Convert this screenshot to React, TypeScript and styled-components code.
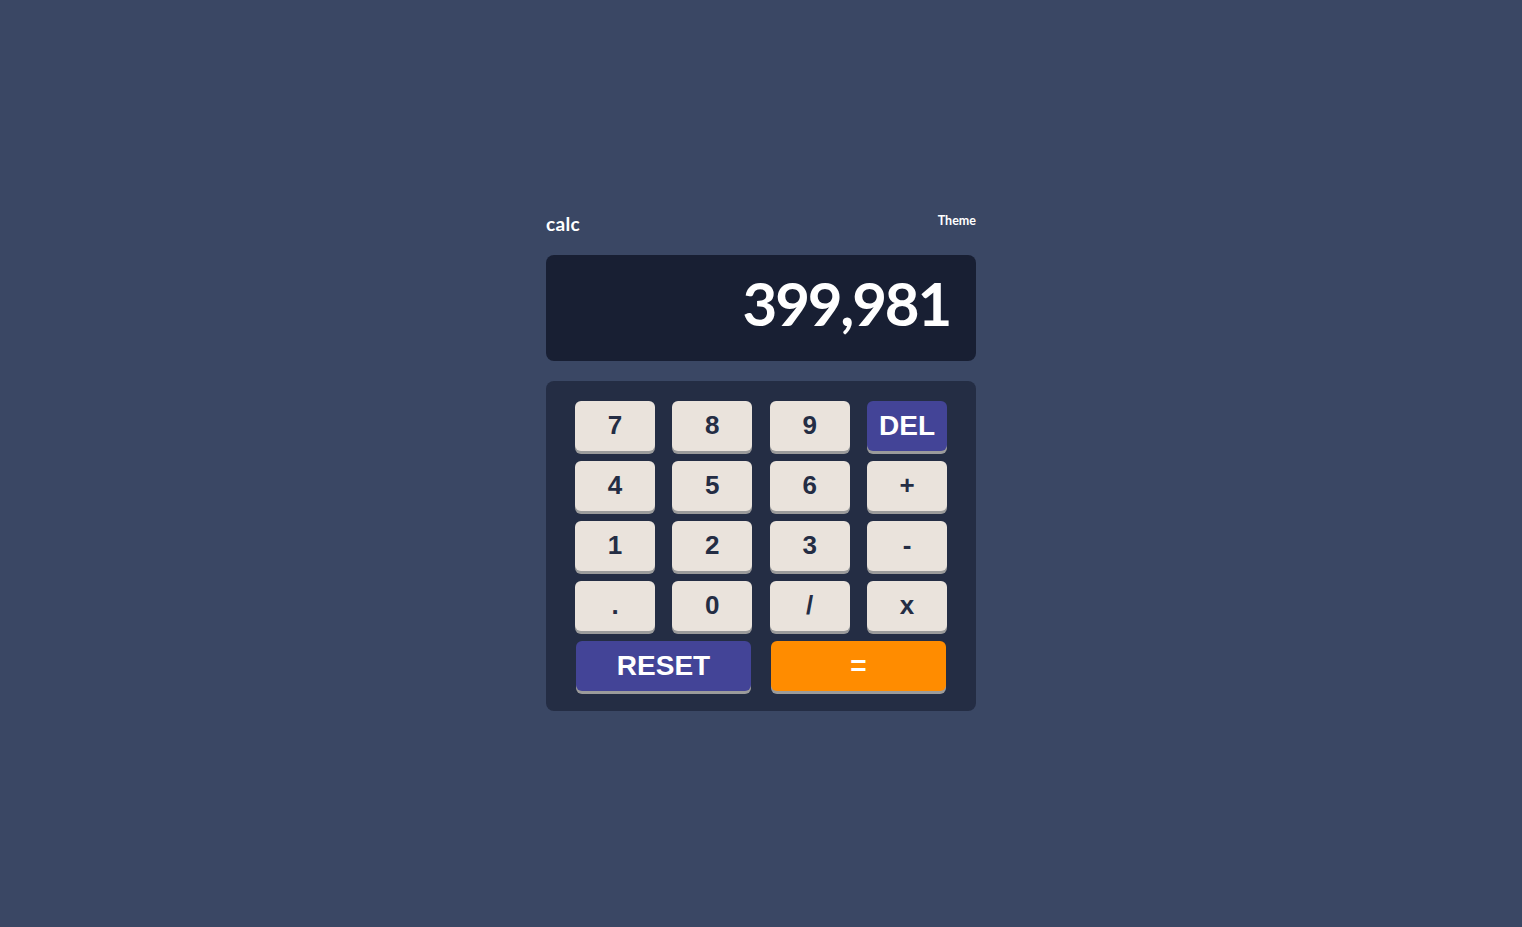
import React, { FC } from "react";
import styled, { createGlobalStyle } from "styled-components";

const GlobalStyle = createGlobalStyle`
  html, body {
    margin: 0;
    padding: 0;
    background: #3a4764;
  }
  body {
    font-family: "Liberation Sans", Arial, sans-serif;
  }
`;

type KeyKind = "num" | "del" | "reset" | "equal";

const keys: { label: string; kind: KeyKind }[] = [
  { label: "7", kind: "num" },
  { label: "8", kind: "num" },
  { label: "9", kind: "num" },
  { label: "DEL", kind: "del" },
  { label: "4", kind: "num" },
  { label: "5", kind: "num" },
  { label: "6", kind: "num" },
  { label: "+", kind: "num" },
  { label: "1", kind: "num" },
  { label: "2", kind: "num" },
  { label: "3", kind: "num" },
  { label: "-", kind: "num" },
  { label: ".", kind: "num" },
  { label: "0", kind: "num" },
  { label: "/", kind: "num" },
  { label: "x", kind: "num" },
];

const App: FC = () => {
  return (
    <>
      <GlobalStyle />
      <Page>
        <Calculator>
          <Header>
            <Logo>calc</Logo>
            <ThemeLabel>Theme</ThemeLabel>
          </Header>
          <Screen>399,981</Screen>
          <Keypad>
            <KeyGrid>
              {keys.map((k) => (
                <Key key={k.label} $kind={k.kind}>
                  {k.label}
                </Key>
              ))}
            </KeyGrid>
            <BottomRow>
              <Key $kind="reset">RESET</Key>
              <Key $kind="equal">=</Key>
            </BottomRow>
          </Keypad>
        </Calculator>
      </Page>
    </>
  );
};

export default App;

//---------------------------------styled component-----------------------------------
const Page = styled.div`
  min-height: 927px;
  display: flex;
  justify-content: center;
  padding-top: 212px;
  box-sizing: border-box;
`;

const Calculator = styled.div`
  width: 430px;
`;

const Header = styled.div`
  display: flex;
  justify-content: space-between;
  align-items: flex-start;
  height: 43px;
  color: #ffffff;
  font-family: "Lato", "Open Sans", sans-serif;
  font-weight: 700;
`;

const Logo = styled.div`
  font-size: 19px;
  line-height: 24px;
  letter-spacing: 0.3px;
`;

const ThemeLabel = styled.div`
  font-size: 12.5px;
  line-height: 18px;
`;

const Screen = styled.div`
  height: 106px;
  background: #181f33;
  border-radius: 8px;
  color: #ffffff;
  font-family: "Lato", "Open Sans", sans-serif;
  font-weight: 700;
  font-size: 60px;
  line-height: 1;
  display: flex;
  align-items: center;
  justify-content: flex-end;
  padding: 0 26px 10px 0;
  box-sizing: border-box;
  margin-bottom: 20px;
  letter-spacing: -2.2px;
`;

const Keypad = styled.div`
  background: #242d44;
  border-radius: 8px;
  padding: 20px 29px 20px 29px;
  box-sizing: border-box;
  height: 330px;
`;

const KeyGrid = styled.div`
  display: grid;
  grid-template-columns: repeat(4, 80px);
  justify-content: space-between;
  row-gap: 10px;
  margin-bottom: 10px;
`;

const BottomRow = styled.div`
  display: grid;
  grid-template-columns: 175px 175px;
  justify-content: space-between;
  padding: 0 1px;
`;

const keyBg: Record<KeyKind, string> = {
  num: "#eae3dc",
  del: "#434497",
  reset: "#434497",
  equal: "#ff8c00",
};

const Key = styled.button<{ $kind: KeyKind }>`
  height: 50px;
  border: none;
  border-radius: 6px;
  background: ${(p) => keyBg[p.$kind]};
  color: ${(p) => (p.$kind === "num" ? "#242d44" : "#ffffff")};
  box-shadow: 0 3px 0 #9b9b9b;
  font-family: "Liberation Sans", Arial, sans-serif;
  font-weight: 700;
  font-size: ${(p) => (p.$kind === "num" ? "26px" : "28px")};
  padding: 0 0 1px;
  cursor: pointer;
  display: flex;
  align-items: center;
  justify-content: center;
`;
